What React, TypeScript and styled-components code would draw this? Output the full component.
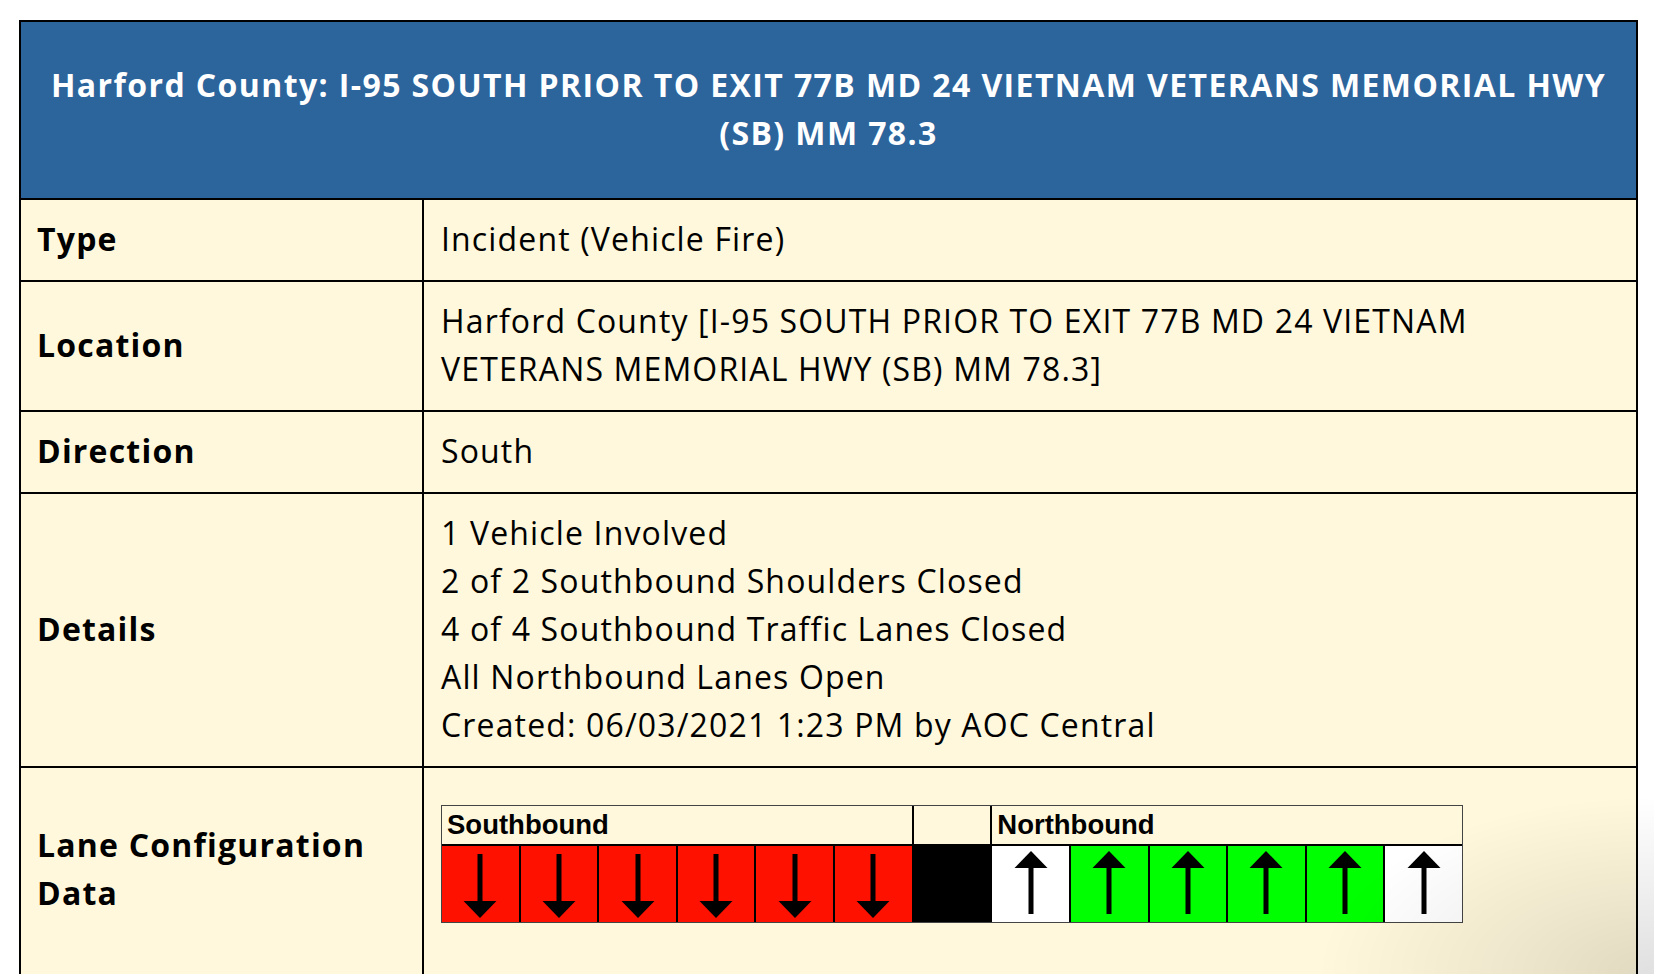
import React from "react";
import styled, { createGlobalStyle } from "styled-components";

const Global = createGlobalStyle`
  html, body { margin: 0; padding: 0; background: #ffffff; }
  body { font-family: "Open Sans", "Noto Sans", sans-serif; color: #000; overflow: hidden; }
`;

const Page = styled.div`
  padding: 20px 0 0 19px;
`;

const Card = styled.div`
  width: 1619px;
  box-sizing: border-box;
  border: 2px solid #000;
  background: #fff8dc;
`;

const Title = styled.div`
  background: #2c649c;
  color: #fff;
  font-weight: 700;
  font-size: 32px;
  line-height: 48px;
  letter-spacing: 1.4px;
  text-align: center;
  padding: 39px 20px 41px;
  border-bottom: 2px solid #000;
`;

const Row = styled.div<{ $last?: boolean }>`
  display: grid;
  grid-template-columns: 403px 1fr;
  border-bottom: ${(p) => (p.$last ? "none" : "2px solid #000")};
`;

const Label = styled.div<{ $pb?: number }>`
  box-sizing: border-box;
  border-right: 2px solid #000;
  padding: 15px 16px ${(p) => p.$pb ?? 17}px;
  font-size: 32px;
  line-height: 48px;
  font-weight: 700;
  letter-spacing: 1.2px;
  display: flex;
  align-items: center;
`;

const Value = styled.div`
  padding: 15px 16px 17px 17px;
  font-size: 32px;
  line-height: 48px;
  font-weight: 400;
  letter-spacing: 1.15px;
`;

const Line = styled.div``;

const LaneValue = styled.div`
  padding: 37px 16px 58px 17px;
`;

const LaneTable = styled.div`
  width: 1022px;
  box-sizing: border-box;
  border: 1px solid #444;
  background: #000;
  display: grid;
  grid-template-columns: repeat(13, 1fr);
  grid-template-rows: 38px 76px;
  column-gap: 2px;
  row-gap: 2px;
  font-family: "Liberation Sans", Arial, sans-serif;
`;

const LaneHead = styled.div<{ $span: number }>`
  grid-column: span ${(p) => p.$span};
  background: #fff8dc;
  font-weight: 700;
  font-size: 27.5px;
  line-height: 38px;
  padding-left: 5px;
`;

const Lane = styled.div<{ $color: string }>`
  background: ${(p) => p.$color};
  display: flex;
  justify-content: center;
`;

const Glow = styled.div`
  position: fixed;
  right: 0;
  bottom: 0;
  width: 340px;
  height: 180px;
  pointer-events: none;
  background: radial-gradient(ellipse at 100% 100%, rgba(0, 0, 0, 0.12) 0%, rgba(0, 0, 0, 0.06) 35%, rgba(0, 0, 0, 0) 70%);
`;

type Dir = "up" | "down" | "none";

const Arrow: React.FC<{ dir: Dir }> = ({ dir }) => {
  if (dir === "none") return null;
  return (
    <svg width="34" height="76" viewBox="0 0 34 76">
      {dir === "down" ? (
        <>
          <rect x="14.5" y="8" width="5" height="48" fill="#000" />
          <polygon points="0.5,55 33.5,55 17,72" fill="#000" />
        </>
      ) : (
        <>
          <polygon points="17,5 0.5,22 33.5,22" fill="#000" />
          <rect x="14.5" y="21" width="5" height="47" fill="#000" />
        </>
      )}
    </svg>
  );
};

const lanes: { color: string; dir: Dir }[] = [
  { color: "#ff1100", dir: "down" },
  { color: "#ff1100", dir: "down" },
  { color: "#ff1100", dir: "down" },
  { color: "#ff1100", dir: "down" },
  { color: "#ff1100", dir: "down" },
  { color: "#ff1100", dir: "down" },
  { color: "#000000", dir: "none" },
  { color: "#ffffff", dir: "up" },
  { color: "#00ff00", dir: "up" },
  { color: "#00ff00", dir: "up" },
  { color: "#00ff00", dir: "up" },
  { color: "#00ff00", dir: "up" },
  { color: "#ffffff", dir: "up" },
];

export default function App() {
  return (
    <>
      <Global />
      <Page>
        <Card>
          <Title>
            Harford County: I-95 SOUTH PRIOR TO EXIT 77B MD 24 VIETNAM VETERANS MEMORIAL HWY (SB) MM 78.3
          </Title>
          <Row>
            <Label>Type</Label>
            <Value>Incident (Vehicle Fire)</Value>
          </Row>
          <Row>
            <Label>Location</Label>
            <Value>
              Harford County [I-95 SOUTH PRIOR TO EXIT 77B MD 24 VIETNAM VETERANS MEMORIAL HWY (SB) MM 78.3]
            </Value>
          </Row>
          <Row>
            <Label>Direction</Label>
            <Value>South</Value>
          </Row>
          <Row>
            <Label>Details</Label>
            <Value>
              <Line>1 Vehicle Involved</Line>
              <Line>2 of 2 Southbound Shoulders Closed</Line>
              <Line>4 of 4 Southbound Traffic Lanes Closed</Line>
              <Line>All Northbound Lanes Open</Line>
              <Line>Created: 06/03/2021 1:23 PM by AOC Central</Line>
            </Value>
          </Row>
          <Row $last>
            <Label $pb={27}>Lane Configuration Data</Label>
            <LaneValue>
              <LaneTable>
                <LaneHead $span={6}>Southbound</LaneHead>
                <LaneHead $span={1} />
                <LaneHead $span={6}>Northbound</LaneHead>
                {lanes.map((l, i) => (
                  <Lane key={i} $color={l.color}>
                    <Arrow dir={l.dir} />
                  </Lane>
                ))}
              </LaneTable>
            </LaneValue>
          </Row>
        </Card>
      </Page>
      <Glow />
    </>
  );
}
